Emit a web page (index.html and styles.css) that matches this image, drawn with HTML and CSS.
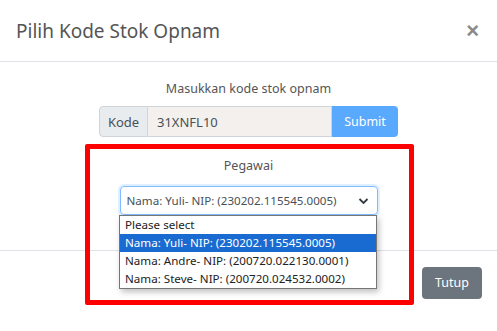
FILE: index.html
```html
<!DOCTYPE html>
<html lang="en">
<head>
    <meta charset="UTF-8">
    <meta name="viewport" content="width=device-width, initial-scale=1.0">
    <title>Pilih Kode Stok Opnam</title>
    <link rel="stylesheet" href="styles.css">
</head>
<body>
    <div class="modal">
        <div class="modal-header">
            <h5 class="modal-title">Pilih Kode Stok Opnam</h5>
            <button class="close" type="button">&times;</button>
        </div>
        <div class="modal-body">
            <p class="label">Masukkan kode stok opnam</p>
            <div class="input-group">
                <span class="addon">Kode</span>
                <input class="code-input" type="text" value="31XNFL10">
                <button class="btn-submit" type="button">Submit</button>
            </div>
            <p class="label label-pegawai">Pegawai</p>
            <div class="select">
                <span>Nama: Yuli- NIP: (230202.115545.0005)</span>
                <svg width="11" height="8" viewBox="0 0 11 8"><path d="M1.5 2 L5.5 6 L9.5 2" fill="none" stroke="#343a40" stroke-width="1.8"/></svg>
            </div>
        </div>
        <div class="modal-footer">
            <button class="btn-close" type="button">Tutup</button>
        </div>

        <!-- open native dropdown -->
        <ul class="options">
            <li>Please select</li>
            <li class="selected">Nama: Yuli- NIP: (230202.115545.0005)</li>
            <li>Nama: Andre- NIP: (200720.022130.0001)</li>
            <li>Nama: Steve- NIP: (200720.024532.0002)</li>
        </ul>
        <!-- annotation -->
        <div class="highlight"></div>
    </div>
</body>
</html>
```

FILE: styles.css
```css
body { margin: 0; background: #fff; font-family: "Noto Sans", "Open Sans", sans-serif; color: #212529; }
.modal { position: relative; width: 497px; height: 331px; }

.modal-header { display: flex; align-items: center; justify-content: space-between; height: 62px; padding: 0 16px; box-sizing: border-box; border-bottom: 1px solid #dee2e6; }
.modal-title { margin: 0; font-size: 19px; font-weight: 400; color: #555; }
.close { border: 0; background: none; padding: 0; font-size: 22px; font-weight: 700; color: #8a8a8a; line-height: 1; font-family: Arial, sans-serif; margin-right: 2px; }

.modal-body { padding: 16px 0 0; height: 188px; box-sizing: border-box; display: flex; flex-direction: column; align-items: center; }
.label { margin: 0; font-size: 12.5px; line-height: 21px; color: #555; }
.label-pegawai { margin-top: 18px; }

.input-group { display: flex; margin-top: 7px; height: 31px; width: 299px; }
.addon { display: flex; align-items: center; width: 49px; justify-content: center; box-sizing: border-box; background: #e9ecef; border: 1px solid #ced4da; border-radius: 4px 0 0 4px; font-size: 13px; color: #495057; }
.code-input { flex: 1; min-width: 0; margin: 0; border: 1px solid #ced4da; border-left: 0; background: #f3f0ed; padding: 0 9px; font: inherit; font-size: 13px; color: #495057; }
.btn-submit { width: 66px; border: 0; border-radius: 0 4px 4px 0; background: #59a9ff; color: #fff; font: inherit; font-size: 12.5px; padding: 0; }

.select { display: flex; align-items: center; justify-content: space-between; margin-top: 10px; width: 258px; height: 29px; box-sizing: border-box; padding: 0 6px 0 6px; border: 1px solid #80bdff; border-radius: 4px; box-shadow: 0 0 0 2px rgba(0, 123, 255, 0.12); font-size: 11.6px; color: #495057; white-space: nowrap; }
.select svg { margin-right: 2px; }

.modal-footer { display: flex; justify-content: flex-end; align-items: center; height: 64px; padding: 0 15px; box-sizing: border-box; border-top: 1px solid #dee2e6; }
.btn-close { height: 32px; width: 60px; border: 0; border-radius: 4px; background: #6c757d; color: #fff; font: inherit; font-size: 12.5px; padding: 0; }

.options { position: absolute; left: 119px; top: 215px; width: 258px; margin: 0; padding: 0; list-style: none; background: #fff; border: 1px solid #767676; box-sizing: border-box; box-shadow: 2px 3px 6px rgba(0, 0, 0, 0.25); font-size: 11.6px; }
.options li { height: 18px; line-height: 18px; padding-left: 5px; color: #222; white-space: nowrap; }
.options li.selected { background: #1a6bd1; color: #fff; }

.highlight { position: absolute; left: 85px; top: 144px; width: 329px; height: 161px; box-sizing: border-box; border: 5px solid #ff0000; border-radius: 2px; }
```
